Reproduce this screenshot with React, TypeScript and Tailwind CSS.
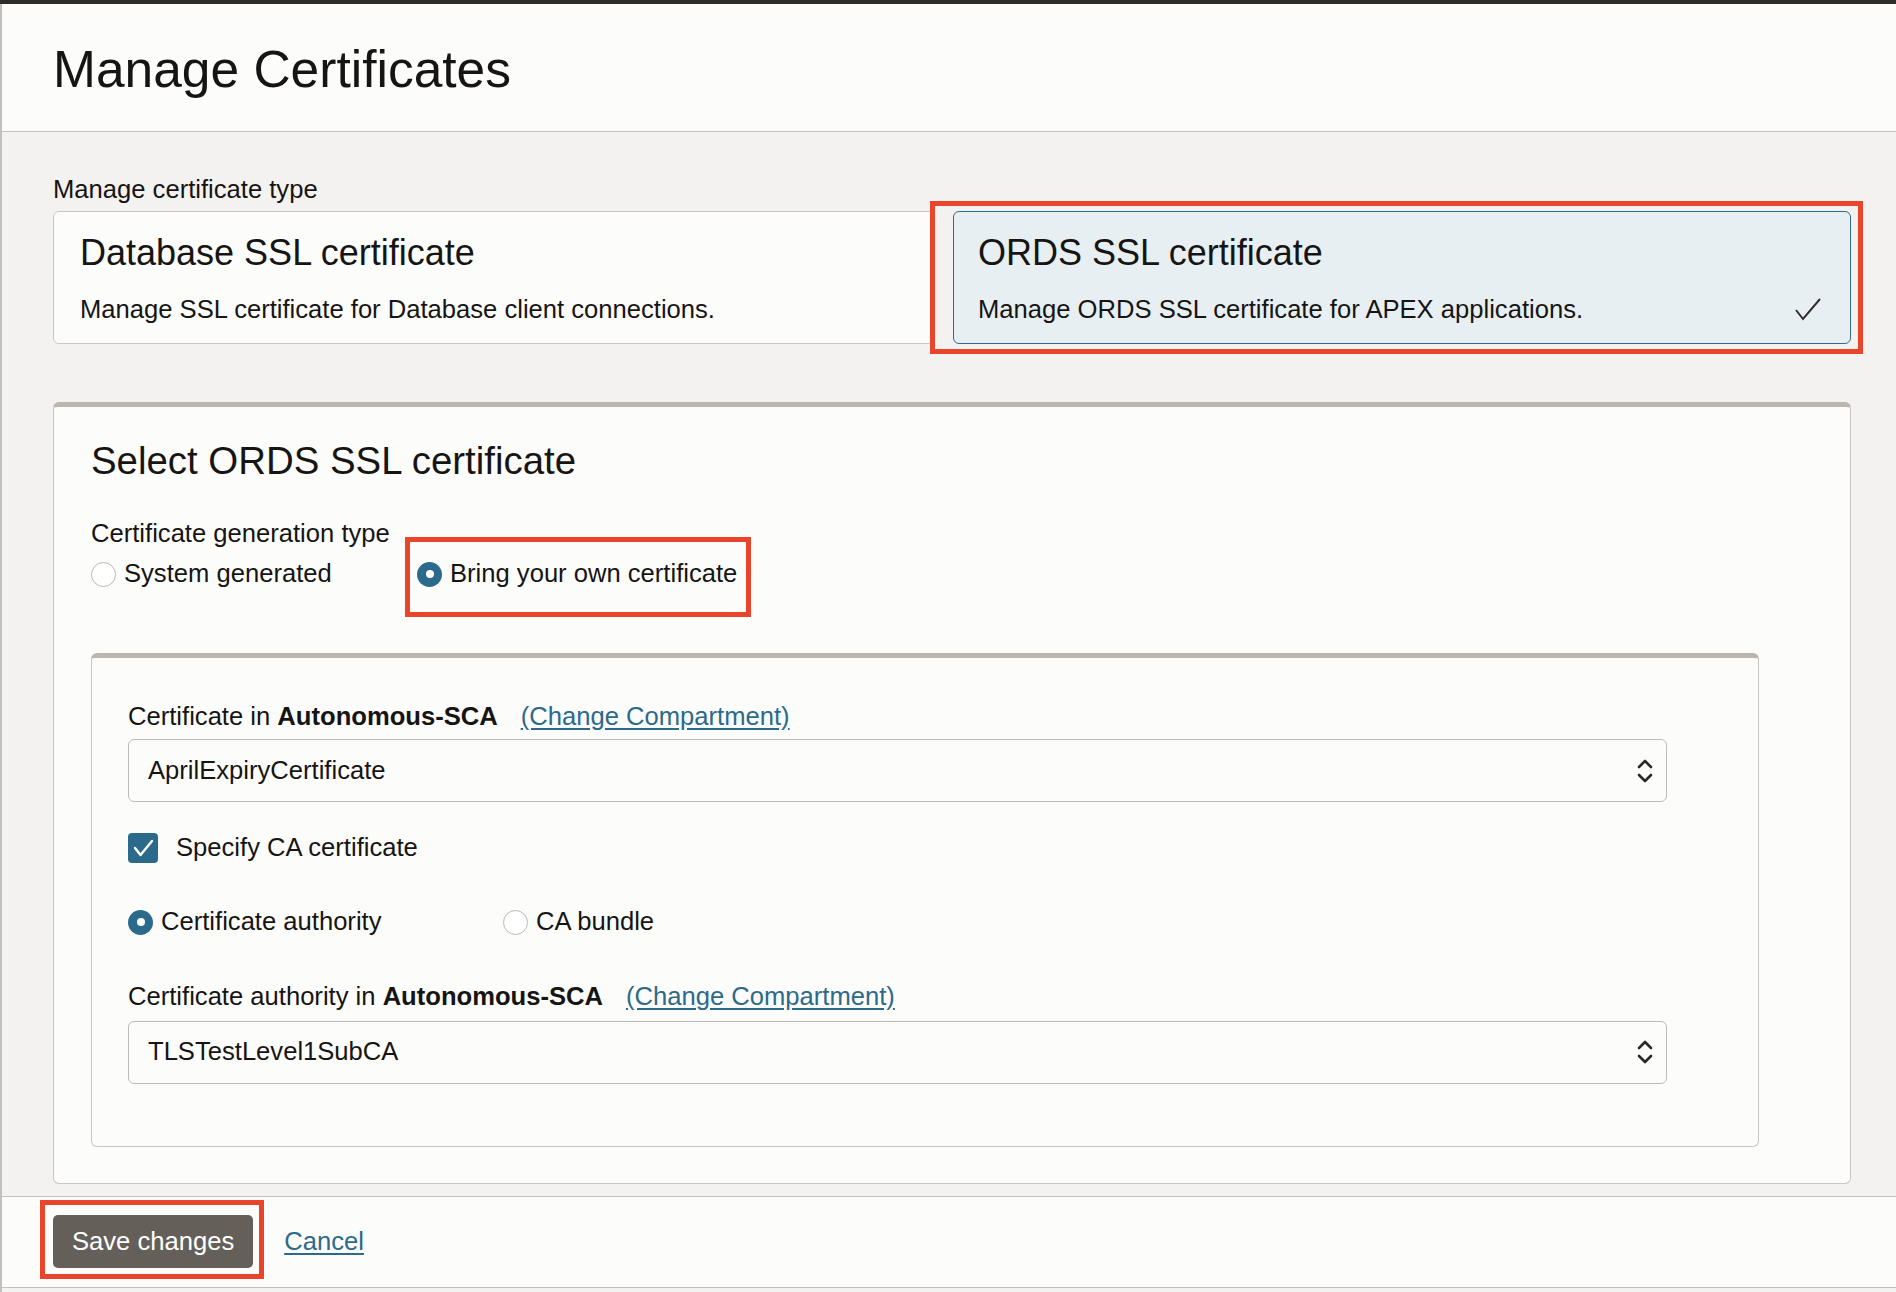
import React from 'react';

const Radio = ({ checked }: { checked?: boolean }) =>
  checked ? (
    <span className="flex h-[25px] w-[25px] shrink-0 items-center justify-center rounded-full bg-[#2c6a8c]">
      <span className="h-[8px] w-[8px] rounded-full bg-white" />
    </span>
  ) : (
    <span className="h-[25px] w-[25px] shrink-0 rounded-full border border-[#bdb8b3] bg-white" />
  );

const SelectBox = ({ value, height }: { value: string; height: string }) => (
  <div className={`flex w-[1539px] items-center justify-between rounded-[6px] border border-[#bfbab5] bg-[#fcfcfb] pl-[19px] pr-[13px] ${height}`}>
    <span className="text-[25.6px] leading-none">{value}</span>
    <svg width="16" height="28" viewBox="0 0 16 28" fill="none" stroke="#2b2926" strokeWidth="2.6" strokeLinecap="round" strokeLinejoin="round">
      <polyline points="2,10 8,4 14,10" />
      <polyline points="2,18 8,24 14,18" />
    </svg>
  </div>
);

const RedBox = ({ className }: { className: string }) => (
  <span className={`pointer-events-none absolute border-[5px] border-[#e8452c] ${className}`} />
);

export default function App() {
  return (
    <div className="flex h-[1292px] flex-col bg-[#f3f2f1] font-['Liberation_Sans',Arial,sans-serif] text-[#161513]">
      <div className="h-1 shrink-0 bg-[#2f2d2a]" />
      <div className="flex flex-1 flex-col border-l-2 border-[#c3bfbb]">
        {/* Header */}
        <header className="h-[128px] shrink-0 border-b border-[#c8c1be] bg-[#fcfcfb] pl-[51px] pt-[40px]">
          <h1 className="text-[51.5px] leading-none">Manage Certificates</h1>
        </header>

        <main className="pl-[51px] pr-[45px] pt-[45px]">
          <p className="text-[25.6px] leading-none">Manage certificate type</p>

          {/* Certificate type cards */}
          <div className="mt-[8px] flex gap-[18px]">
            <div className="h-[133px] flex-1 rounded-[6px] border border-[#cac6c2] bg-[#fcfcfb] pl-[26px] pt-[23px]">
              <h2 className="text-[36px] leading-none">Database SSL certificate</h2>
              <p className="mt-[26px] text-[25.6px] leading-none">Manage SSL certificate for Database client connections.</p>
            </div>
            <div className="relative h-[133px] w-[898px] rounded-[6px] border border-[#2e6b8e] bg-[#e8eff3] pl-[24px] pr-[29px] pt-[23px]">
              <h2 className="text-[36px] leading-none">ORDS SSL certificate</h2>
              <div className="mt-[26px] flex items-center justify-between">
                <p className="text-[25.6px] leading-none">Manage ORDS SSL certificate for APEX applications.</p>
                <svg width="26" height="23" viewBox="0 0 26 23" fill="none" stroke="#312d2a" strokeWidth="2">
                  <polyline points="1,12 8,21 25,1" />
                </svg>
              </div>
              <RedBox className="-bottom-[11px] -left-[24px] -right-[13px] -top-[11px]" />
            </div>
          </div>

          {/* Select ORDS SSL certificate */}
          <section className="mt-[58px] rounded-[6px] border border-t-[5px] border-[#cac6c2] border-t-[#bcb6b0] bg-[#fcfcfb] pb-[36px] pl-[37px] pt-[35px]">
            <h2 className="text-[38.4px] leading-none">Select ORDS SSL certificate</h2>
            <p className="mt-[41px] text-[25.6px] leading-none">Certificate generation type</p>
            <div className="mt-[15px] flex h-[25px] items-center">
              <label className="flex w-[326px] items-center gap-[8px]">
                <Radio />
                <span className="text-[25.6px] leading-none">System generated</span>
              </label>
              <label className="relative flex items-center gap-[8px]">
                <Radio checked />
                <span className="text-[25.6px] leading-none">Bring your own certificate</span>
                <RedBox className="-bottom-[30px] -left-[12px] -right-[14px] -top-[24px]" />
              </label>
            </div>

            <div className="mt-[66px] w-[1668px] rounded-[6px] border border-t-[5px] border-[#cac6c2] border-t-[#bcb6b0] pb-[62px] pl-[36px] pt-[46px]">
              <div className="flex items-center gap-[23px] text-[25.6px] leading-none">
                <span>
                  Certificate in <span className="font-bold">Autonomous-SCA</span>
                </span>
                <a href="#" className="text-[#2c6a8a] underline underline-offset-[3px]">(Change Compartment)</a>
              </div>
              <div className="mt-[10px]">
                <SelectBox value="AprilExpiryCertificate" height="h-[63px]" />
              </div>

              <label className="mt-[31px] flex items-center gap-[18px]">
                <span className="flex h-[30px] w-[30px] items-center justify-center rounded-[4px] bg-[#2c6a8c]">
                  <svg width="30" height="30" viewBox="0 0 30 30" fill="none" stroke="#ffffff" strokeWidth="2.4" strokeLinecap="round" strokeLinejoin="round">
                    <polyline points="7,15 12.5,22 24,8" />
                  </svg>
                </span>
                <span className="text-[25.6px] leading-none">Specify CA certificate</span>
              </label>

              <div className="mt-[46px] flex h-[26px] items-center">
                <label className="flex w-[375px] items-center gap-[8px]">
                  <Radio checked />
                  <span className="text-[25.6px] leading-none">Certificate authority</span>
                </label>
                <label className="flex items-center gap-[8px]">
                  <Radio />
                  <span className="text-[25.6px] leading-none">CA bundle</span>
                </label>
              </div>

              <div className="mt-[49px] flex items-center gap-[23px] text-[25.6px] leading-none">
                <span>
                  Certificate authority in <span className="font-bold">Autonomous-SCA</span>
                </span>
                <a href="#" className="text-[#2c6a8a] underline underline-offset-[3px]">(Change Compartment)</a>
              </div>
              <div className="mt-[11px]">
                <SelectBox value="TLSTestLevel1SubCA" height="h-[63px]" />
              </div>
            </div>
          </section>
        </main>

        {/* Footer */}
        <footer className="mt-[12px] flex h-[92px] shrink-0 items-center border-y border-[#c5c0bc] bg-[#fcfcfb] pl-[51px]">
          <span className="relative">
            <button className="h-[53px] rounded-[5px] bg-[#655f5a] px-[19px] text-[25.6px] leading-none text-white">Save changes</button>
            <RedBox className="-bottom-[11px] -left-[13px] -right-[11px] -top-[15px]" />
          </span>
          <a href="#" className="ml-[31px] text-[25.6px] leading-none text-[#2c6a8a] underline underline-offset-[3px]">Cancel</a>
        </footer>
      </div>
    </div>
  );
}
